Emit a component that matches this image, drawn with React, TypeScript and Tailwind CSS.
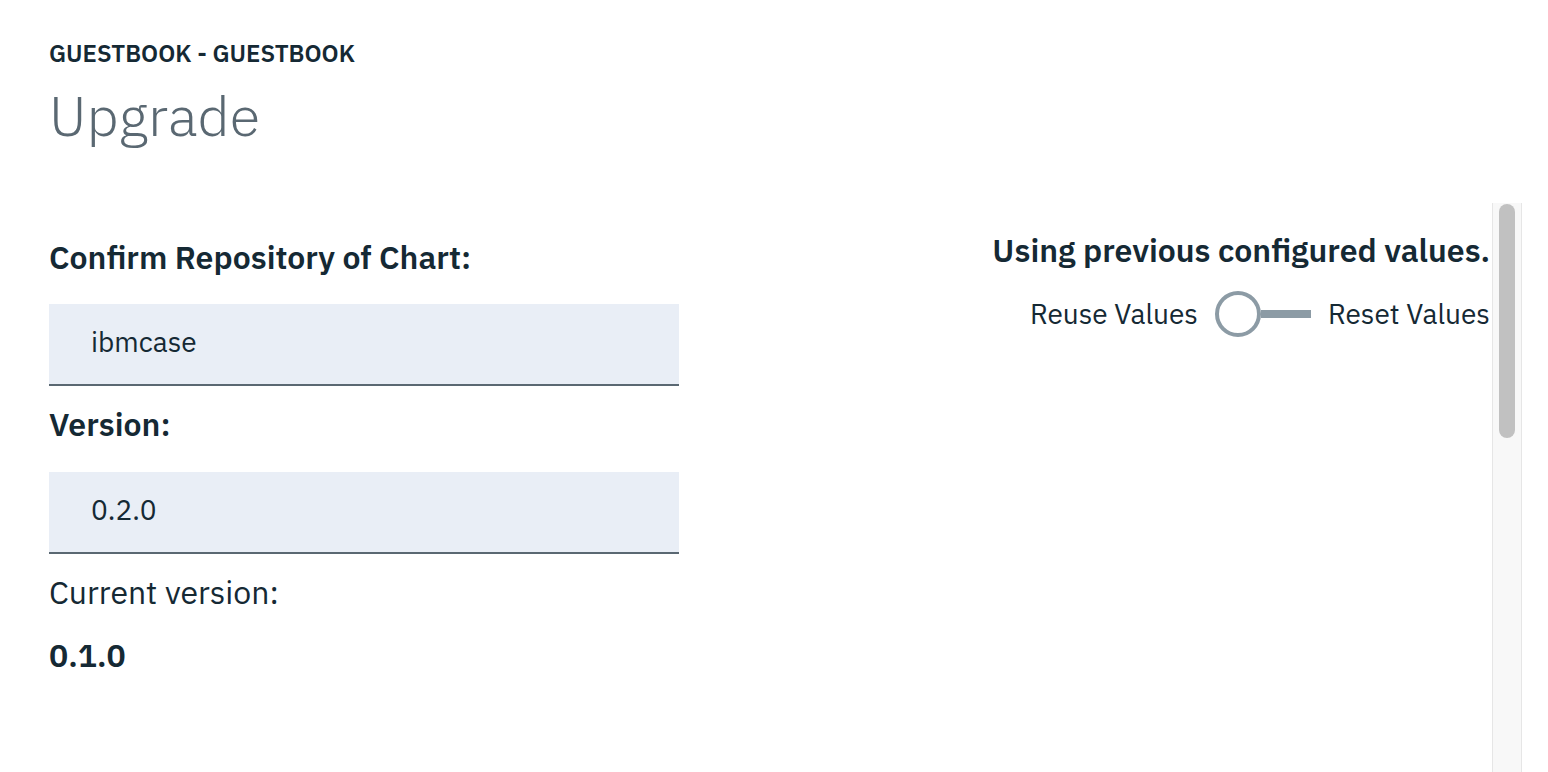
import React from "react";

const labelStyles = "text-[32px] font-semibold leading-[40px]";
const fieldStyles =
  "flex h-[82px] w-[630px] items-center border-b-2 border-[#5a6872] bg-[#e9eef6] pb-[4px] pl-[42px] text-[28px] leading-[28px]";

function Toggle() {
  return (
    <div className="flex items-center">
      <div className="h-[46px] w-[46px] rounded-full border-[4px] border-[#8c9ba5] bg-white" />
      <div className="h-[8px] w-[50px] bg-[#8c9ba5]" />
    </div>
  );
}

export default function App() {
  return (
    <div className="h-[772px] w-[1548px] overflow-hidden bg-white font-['IBM_Plex_Sans',Roboto,sans-serif] text-[#152934]">
      <div className="pl-[49px] pt-[39px]">
        <p className="text-[24px] font-semibold leading-[28px]">
          GUESTBOOK - GUESTBOOK
        </p>
        <h1 className="mt-[16px] text-[56px] font-light leading-[64px] text-[#5a6872]">
          Upgrade
        </h1>
      </div>

      <div className="mt-[56px] flex h-[569px] pl-[49px] pr-[26px]">
        <div className="flex flex-1 justify-between pr-[2px]">
          <div className="w-[630px] pt-[34px]">
            <p className={labelStyles}>Confirm Repository of Chart:</p>
            <div className={"mt-[27px] " + fieldStyles}>ibmcase</div>
            <p className={"mt-[18px] " + labelStyles}>Version:</p>
            <div className={"mt-[28px] " + fieldStyles}>0.2.0</div>
            <p className="mt-[18px] text-[32px] leading-[40px]">Current version:</p>
            <p className="mt-[23px] text-[32px] font-semibold leading-[40px]">0.1.0</p>
          </div>
          <div className="flex flex-col items-end pt-[27px]">
            <p className={labelStyles}>Using previous configured values.</p>
            <div className="mt-[21px] flex items-center gap-[17px] text-[28px] leading-[28px]">
              <span>Reuse Values</span>
              <Toggle />
              <span>Reset Values</span>
            </div>
          </div>
        </div>
        <div className="flex w-[30px] justify-center border-x border-[#e6e6e6] bg-[#f8f8f8] pt-[1px]">
          <div className="h-[234px] w-[16px] rounded-full bg-[#c1c1c1]" />
        </div>
      </div>
    </div>
  );
}
